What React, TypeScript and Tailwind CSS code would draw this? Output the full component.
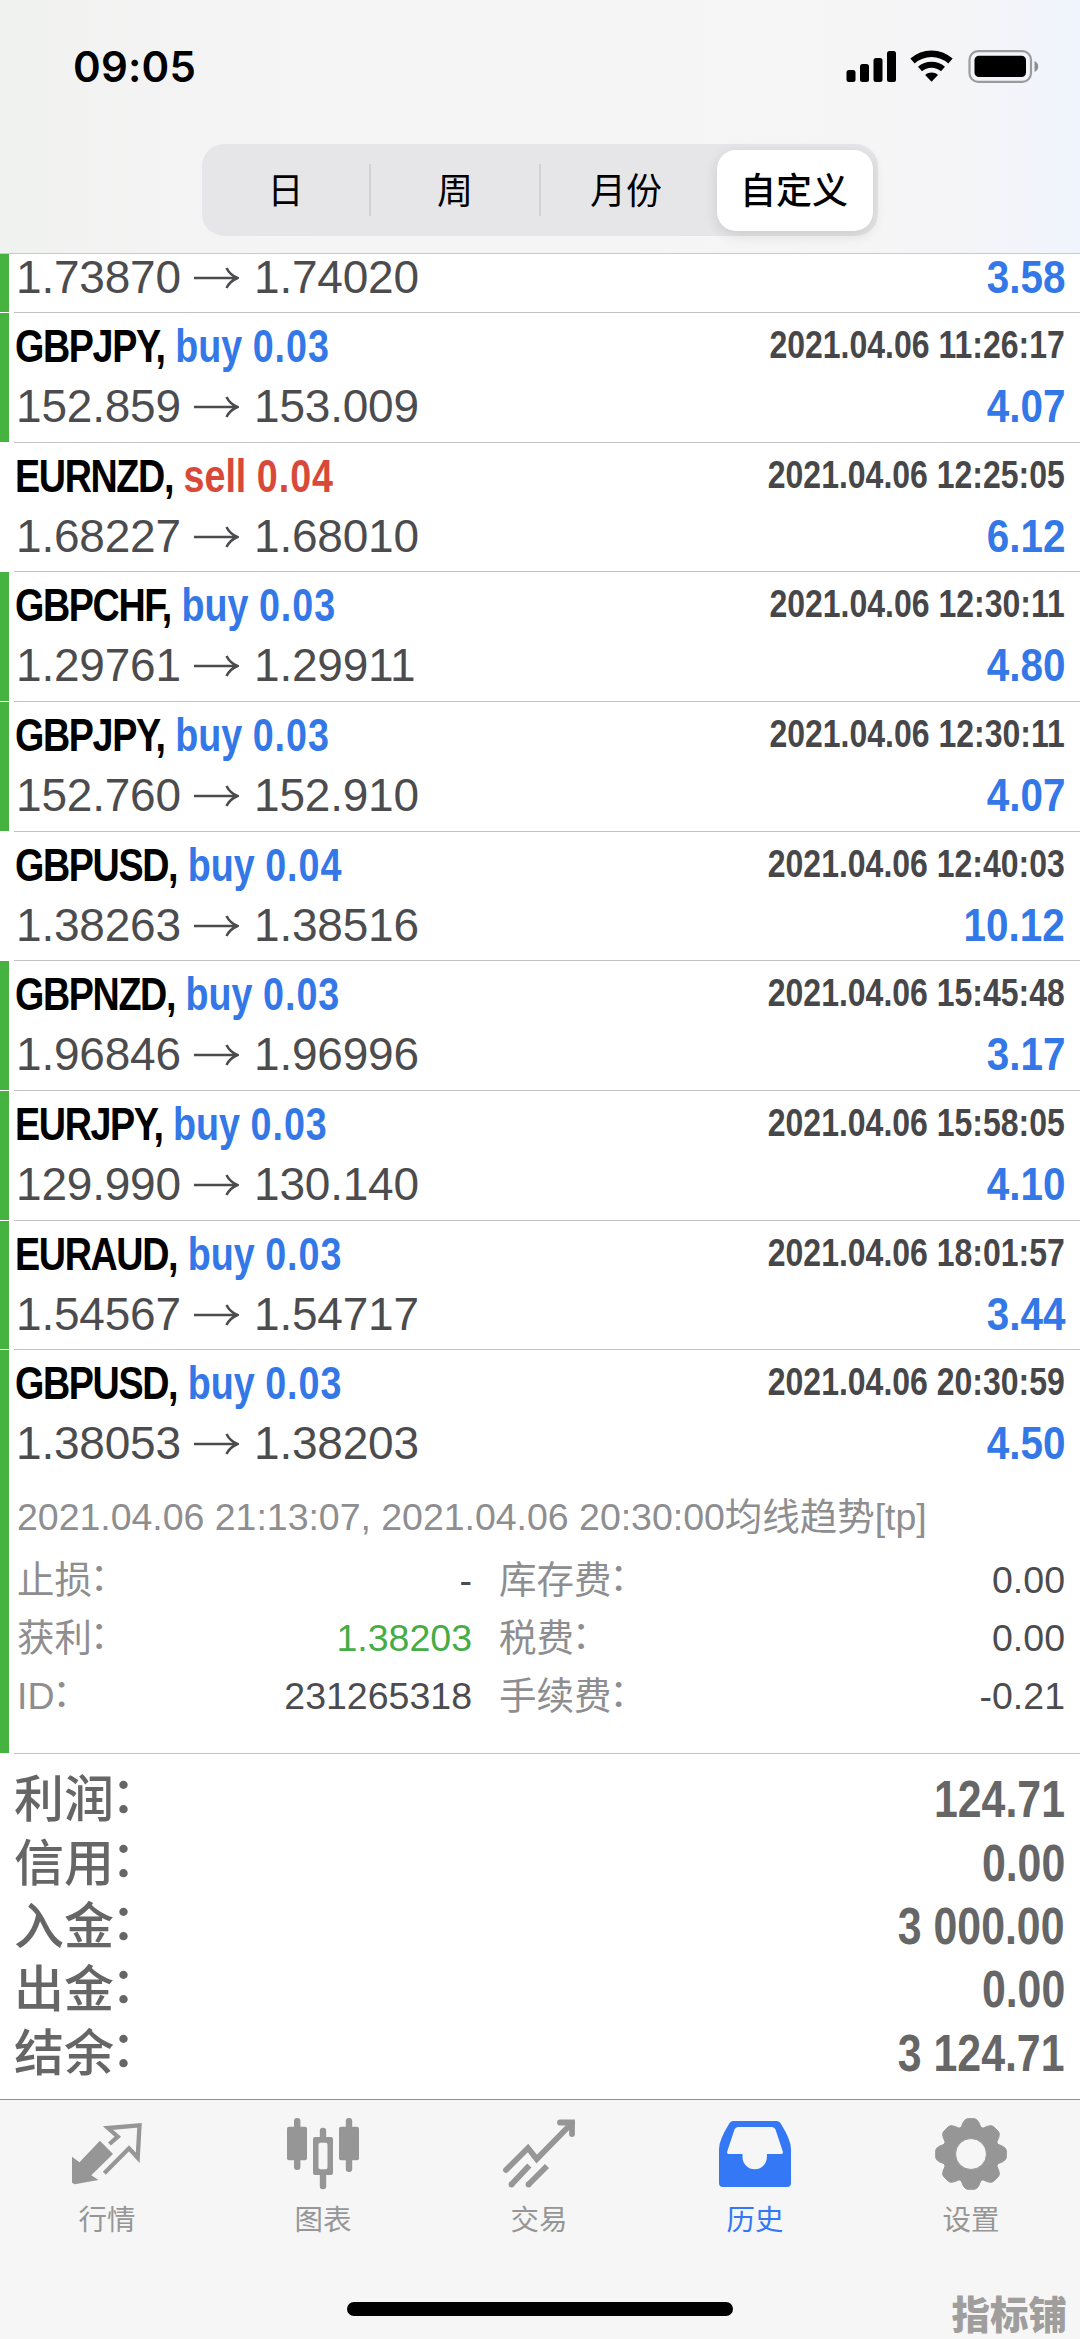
import React from 'react';

interface Trade {
  symbol: string;
  side: 'buy' | 'sell';
  volume: string;
  open: string;
  close: string;
  time: string;
  profit: string;
  marked: boolean;
}

const trades: Trade[] = [
  { symbol: 'GBPJPY', side: 'buy', volume: '0.03', open: '152.859', close: '153.009', time: '2021.04.06 11:26:17', profit: '4.07', marked: true },
  { symbol: 'EURNZD', side: 'sell', volume: '0.04', open: '1.68227', close: '1.68010', time: '2021.04.06 12:25:05', profit: '6.12', marked: false },
  { symbol: 'GBPCHF', side: 'buy', volume: '0.03', open: '1.29761', close: '1.29911', time: '2021.04.06 12:30:11', profit: '4.80', marked: true },
  { symbol: 'GBPJPY', side: 'buy', volume: '0.03', open: '152.760', close: '152.910', time: '2021.04.06 12:30:11', profit: '4.07', marked: true },
  { symbol: 'GBPUSD', side: 'buy', volume: '0.04', open: '1.38263', close: '1.38516', time: '2021.04.06 12:40:03', profit: '10.12', marked: false },
  { symbol: 'GBPNZD', side: 'buy', volume: '0.03', open: '1.96846', close: '1.96996', time: '2021.04.06 15:45:48', profit: '3.17', marked: true },
  { symbol: 'EURJPY', side: 'buy', volume: '0.03', open: '129.990', close: '130.140', time: '2021.04.06 15:58:05', profit: '4.10', marked: true },
  { symbol: 'EURAUD', side: 'buy', volume: '0.03', open: '1.54567', close: '1.54717', time: '2021.04.06 18:01:57', profit: '3.44', marked: true },
];

const lastTrade: Trade = {
  symbol: 'GBPUSD', side: 'buy', volume: '0.03', open: '1.38053', close: '1.38203', time: '2021.04.06 20:30:59', profit: '4.50', marked: true,
};

const summary = [
  ['利润', '124.71'],
  ['信用', '0.00'],
  ['入金', '3 000.00'],
  ['出金', '0.00'],
  ['结余', '3 124.71'],
];

// Status bar
const StatusBar = () => (
  <div className="flex h-[144px] justify-between pl-[73px] pr-[41px] pt-[50px]">
    <span className="font-['Inter'] text-[42px] font-semibold leading-[34px] tracking-[0.2px] text-black">09:05</span>
    <svg width="193" height="33" viewBox="0 0 193 33" className="shrink-0">
      <rect x="0.5" y="20" width="9" height="12" rx="2.5" />
      <rect x="14" y="14" width="9" height="18" rx="2.5" />
      <rect x="27.5" y="8" width="9" height="24" rx="2.5" />
      <rect x="41" y="1" width="9" height="31" rx="2.5" />
      <path d="M66.5 11C77.5 1.2 93.5 1.2 104.500 11" fill="none" stroke="black" strokeWidth="6.5" />
      <path d="M74 19C80.500 13.200 90.500 13.200 97 19" fill="none" stroke="black" strokeWidth="6" />
      <path d="M79.200 25C83 21.800 88.200 21.800 92 25L85.500 31.700Z" />
      <rect x="123.500" y="1.200" width="61.500" height="30.600" rx="8.500" fill="none" stroke="#9b9b9d" strokeWidth="2.200" />
      <rect x="128.500" y="5.700" width="51.500" height="21.300" rx="4.500" />
      <path d="M188.500 11v11c5-2 5-9 0-11Z" fill="#8e8e90" />
    </svg>
  </div>
);

// Period switcher
const Segments = () => (
  <div className="mx-auto flex h-[92px] w-[676px] items-center rounded-[22px] bg-[#e6e6e8] pr-[5px] text-[36px] leading-[55px] text-black">
    <div className="flex h-[52px] w-[169px] justify-center border-r-2 border-[#d2d2d5]">日</div>
    <div className="flex h-[52px] w-[170px] justify-center border-r-2 border-[#d2d2d5]">周</div>
    <div className="flex h-[52px] flex-1 justify-center pr-[6px]">月份</div>
    <div className="flex h-[81px] w-[156px] items-center justify-center rounded-[19px] bg-white pr-[2px] pt-[2px] font-medium shadow-[0_4px_14px_rgba(0,0,0,0.12)]">
      自定义
    </div>
  </div>
);

interface PricesProps {
  open: string;
  close: string;
  profit: string;
  lineClass?: string;
}

const Prices = ({ open, close, profit, lineClass = 'h-[60px] leading-[60px]' }: PricesProps) => (
  <div className={`flex items-center justify-between ${lineClass}`}>
    <div className="flex items-center pl-[2px] text-[46px] tracking-[-0.2px] text-[#4c4c4e]">
      <span className="w-[178px]">{open}</span>
      <svg width="45" height="24" viewBox="0 0 45 24" className="mr-[15px] mt-[2px]" fill="none" stroke="#4c4c4e" strokeWidth="2.600">
        <path d="M0 12H43M32.500 2C35 7 38.500 10 43.500 12C38.500 14 35 17 32.500 22" />
      </svg>
      <span>{close}</span>
    </div>
    <span className="origin-right scale-x-[0.86] text-[47px] font-bold text-[#3478e8]">{profit}</span>
  </div>
);

const TradeRow = ({ trade, children }: { trade: Trade; children?: React.ReactNode }) => (
  <div className="flex">
    <div className={trade.marked ? 'mb-px w-[9px] shrink-0 bg-[#46b23f]' : 'w-[9px] shrink-0'} />
    <div className="ml-[5px] min-h-[129.670px] flex-1 border-b border-[#c3c3c5] pr-[15px] pt-[3px]">
      <div className="flex h-[60px] justify-between pl-px font-bold">
        <span className="origin-left scale-x-[0.802] whitespace-nowrap text-[47px] leading-[60px] text-black">
          <span className="tracking-[-1.7px]">{trade.symbol},</span>{' '}
          <span className={trade.side === 'buy' ? 'text-[#3478e8]' : 'text-[#d9493a]'}>
            {trade.side} <span className="tracking-[1.2px]">{trade.volume}</span>
          </span>
        </span>
        <span className="origin-right scale-x-[0.842] whitespace-nowrap text-[38px] leading-[59px] text-[#47474a]">{trade.time}</span>
      </div>
      <Prices open={trade.open} close={trade.close} profit={trade.profit} />
      {children}
    </div>
  </div>
);

const Colon = () => <span className="-ml-[0.06em] align-[0.08em] leading-none">：</span>;

const DetailRow = ({ left, value, right, amount, green }: { left: string; value: string; right: string; amount: string; green?: boolean }) => (
  <div className="flex h-[57.670px] leading-[57.670px] text-[#4c4c4e]">
    <div className="flex w-[455px] justify-between">
      <span className="text-[#8e8e90]">{left}<Colon /></span>
      <span className={green ? 'text-[#46ac46]' : ''}>{value}</span>
    </div>
    <div className="ml-[27px] flex flex-1 justify-between">
      <span className="text-[#8e8e90]">{right}<Colon /></span>
      <span>{amount}</span>
    </div>
  </div>
);

const QuotesIcon = () => (
  <svg width="72" height="72" viewBox="0 0 72 72" fill="currentColor">
    <path d="M1 38.700L8.500 44.300L28.900 22.700L42 36L20.300 57.300L27.500 62L3.700 66.300L1 64.700Z" />
    <path d="M38.500 26L46.800 18.700L37 10L68.500 7.300L66.700 39.700L58 30.300L33.300 55.300" fill="none" stroke="currentColor" strokeWidth="4.300" />
  </svg>
);

const ChartIcon = () => (
  <svg width="72" height="72" viewBox="0 0 72 72" fill="currentColor">
    <rect x="0" y="8.700" width="20" height="33.600" rx="2" />
    <rect x="7" y="0" width="6.400" height="52" rx="3" />
    <path fillRule="evenodd" d="M28 19H44Q46 19 46 21V55Q46 57 44 57H28Q26 57 26 55V21Q26 19 28 19ZM33.500 24.700Q31.500 24.700 31.500 26.700V49.300Q31.500 51.300 33.500 51.300H38.500Q40.500 51.300 40.500 49.300V26.700Q40.500 24.700 38.500 24.700Z" />
    <path d="M32.800 20V12.500Q32.800 9.700 36 9.700T39.200 12.500V20ZM32.800 56V68.500Q32.800 71.300 36 71.300T39.200 68.500V56Z" />
    <rect x="52" y="8.700" width="20" height="33.600" rx="2" />
    <rect x="58.800" y="0" width="6.400" height="54" rx="3" />
  </svg>
);

const TradeIcon = () => (
  <svg width="72" height="72" viewBox="0 0 72 72" fill="none" stroke="currentColor" strokeWidth="5.800">
    <path d="M3 52L25 30L33.700 41L69 5" strokeLinecap="round" />
    <path d="M57 4.500H69V16" strokeLinecap="round" />
    <path d="M8.500 66.500L26.300 47.500M25.500 66.500L44 48" />
    <g fill="currentColor" stroke="none">
      <circle cx="8.500" cy="66.500" r="2.900" />
      <circle cx="25.500" cy="66.500" r="2.900" />
    </g>
  </svg>
);

const HistoryIcon = () => (
  <svg width="72" height="72" viewBox="0 0 72 72" fill="currentColor">
    <path
      fillRule="evenodd"
      d="M14.500 3H57.500Q60.500 3 62 6Q72 22 72 31V65Q72 69 68 69H4Q0 69 0 65V31Q0 22 10 6Q11.500 3 14.500 3ZM19 9Q16.500 9 15.500 11.500L8.200 33.500Q7.500 36 10 36H23.500V39A12.200 12.200 0 0 0 47.900 39V36H62Q64.500 36 63.800 33.500L56.500 11.500Q55.500 9 53 9Z"
    />
  </svg>
);

const SettingsIcon = () => {
  const profile = [[-20, 28.5], [-14, 32.5], [-9.500, 34.800], [-6, 35.500], [6, 35.500], [9.500, 34.800], [14, 32.500], [20, 28.500]];
  const points: string[] = [];
  for (let tooth = 0; tooth < 8; tooth++) {
    profile.forEach(([deg, r]) => {
      const a = ((tooth * 45 + deg - 90) * Math.PI) / 180;
      points.push(`${36 + r * Math.cos(a)} ${36 + r * Math.sin(a)}`);
    });
  }
  return (
    <svg width="72" height="72" viewBox="0 0 72 72" fill="currentColor">
      <path
        fillRule="evenodd"
        stroke="currentColor"
        strokeWidth="1"
        strokeLinejoin="round"
        d={`M${points.join('L')}ZM36 20.500A15.500 15.500 0 1 0 36 51.500A15.500 15.500 0 1 0 36 20.500Z`}
      />
    </svg>
  );
};

const tabs = [
  { label: '行情', icon: <QuotesIcon /> },
  { label: '图表', icon: <ChartIcon /> },
  { label: '交易', icon: <TradeIcon /> },
  { label: '历史', icon: <HistoryIcon />, active: true },
  { label: '设置', icon: <SettingsIcon /> },
];

// Bottom tab bar
const TabBar = () => (
  <div className="relative h-[240px] border-t border-[#929294] bg-[#f6f6f6]">
    <div className="-ml-px mr-px flex pt-[18px]">
      {tabs.map((tab) => (
        <div
          key={tab.label}
          className={tab.active ? 'flex flex-1 flex-col items-center text-[#3478f6]' : 'flex flex-1 flex-col items-center text-[#969696]'}
        >
          {tab.icon}
          <span className="mt-[10px] text-[28.500px] leading-[40px]">{tab.label}</span>
        </div>
      ))}
    </div>
    <div className="absolute bottom-[23px] left-[347px] h-[14px] w-[386px] rounded-full bg-black" />
    <span className="absolute bottom-[3px] right-[13px] text-[38.500px] font-black leading-[40px] text-[#a09d9d]">指标铺</span>
  </div>
);

export default function App() {
  return (
    <div className="flex h-[2339px] w-[1080px] flex-col overflow-hidden bg-white font-['Liberation_Sans','Noto_Sans_CJK_SC',sans-serif]">
      <header className="h-[254px] border-b border-[#c9c9cc] bg-[linear-gradient(to_right,#eff2ef_0%,#f4f3f3_12%,#f6f5f5_30%,#f5f5f7_88%,#f0f4fc_100%)]">
        <StatusBar />
        <Segments />
      </header>

      {/* Row scrolled partly under the header */}
      <div className="flex h-[59px]">
        <div className="mb-px w-[9px] bg-[#46b23f]" />
        <div className="ml-[5px] flex-1 border-b border-[#c3c3c5] pr-[15px]">
          <Prices open="1.73870" close="1.74020" profit="3.58" lineClass="h-[46px] leading-[46px]" />
        </div>
      </div>

      {trades.map((trade, i) => (
        <TradeRow key={i} trade={trade} />
      ))}

      <TradeRow trade={lastTrade}>
        <div className="mt-[15px] h-[265px] pl-[3px] text-[37.500px]">
          <p className="leading-[58px] tracking-[-0.03px] text-[#8e8e90]">2021.04.06 21:13:07, 2021.04.06 20:30:00均线趋势[tp]</p>
          <div className="mt-[6px]">
            <DetailRow left="止损" value="-" right="库存费" amount="0.00" />
            <DetailRow left="获利" value="1.38203" right="税费" amount="0.00" green />
            <DetailRow left="ID" value="231265318" right="手续费" amount="-0.21" />
          </div>
        </div>
      </TradeRow>

      {/* Totals */}
      <div className="flex-1 pl-[14px] pr-[15px] pt-[14px]">
        {summary.map(([label, value]) => (
          <div key={label} className="flex h-[63.400px] justify-between leading-[63.400px] text-[#666666]">
            <span className="pt-px text-[50px] font-medium">{label}<Colon /></span>
            <span className="origin-right scale-x-[0.84] whitespace-nowrap text-[51px] font-bold">{value}</span>
          </div>
        ))}
      </div>

      <TabBar />
    </div>
  );
}
